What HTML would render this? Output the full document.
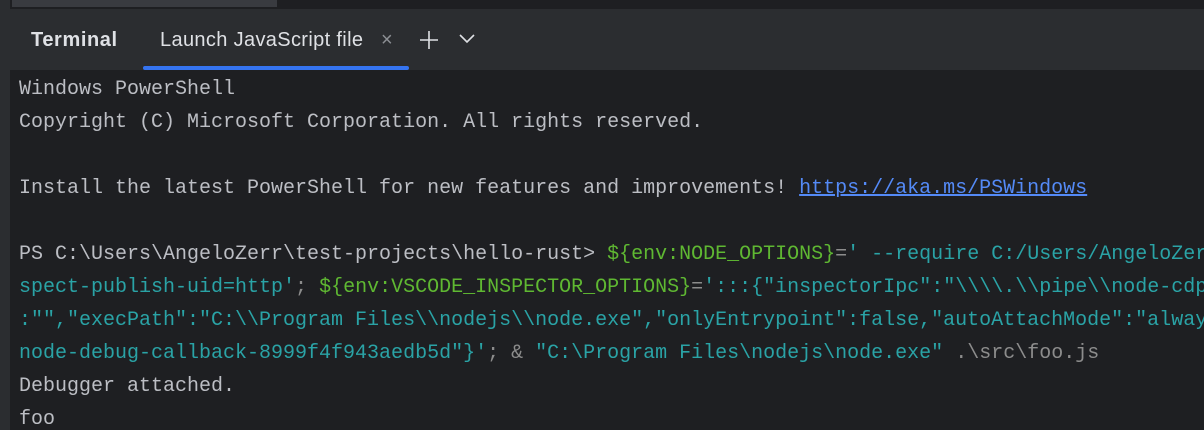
<!DOCTYPE html>
<html><head><style>
html,body{margin:0;padding:0;width:1204px;height:430px;overflow:hidden;background:#1e1f22;position:relative;font-family:"Liberation Sans",sans-serif}
.left{position:absolute;left:0;top:0;width:10px;height:430px;background:#2b2d30}
.top{position:absolute;left:10px;top:0;width:1194px;height:9px;background:#1e1f22}
.proj{position:absolute;left:12px;top:0;width:265px;height:7px;background:#393b40;overflow:hidden}
.tabs{position:absolute;left:10px;top:9px;width:1194px;height:61px;background:#2b2d30}
.tab{position:absolute;top:20px;font-size:20px;color:#dfe1e5}
.ul{position:absolute;left:143px;top:66px;width:266px;height:4px;border-radius:2px;background:#3574f0}
.term{position:absolute;left:19px;top:73px;font-family:"Liberation Mono",monospace;font-size:20px;line-height:33px;white-space:pre;color:#bcbec4}
.g{color:#5fb832}.t{color:#2aa3a6}.d{color:#8c8c8c}.l{color:#548af7;text-decoration:underline}
</style></head><body>
<div class="left"></div><div class="top"></div><div class="proj"></div>
<div class="tabs">
<div class="tab" style="left:21px;font-weight:bold;letter-spacing:0.6px;">Terminal</div>
<div class="tab" style="left:150px;letter-spacing:0.35px;">Launch JavaScript file</div>
<div class="tab" style="left:371px;color:#8c8f94;">×</div>
<svg style="position:absolute;left:408px;top:20px" width="22" height="22"><path d="M11 2V20M2 11H20" stroke="#dfe1e5" stroke-width="1.6"/></svg>
<svg style="position:absolute;left:448px;top:22px" width="18" height="14"><path d="M2 4L9 11L16 4" stroke="#dfe1e5" stroke-width="1.6" fill="none"/></svg>
</div>
<div class="ul"></div>
<div class="term">Windows PowerShell
Copyright (C) Microsoft Corporation. All rights reserved.

Install the latest PowerShell for new features and improvements! <span class="l">https://aka.ms/PSWindows</span>

PS C:\Users\AngeloZerr\test-projects\hello-rust&gt; <span class="g">${env:NODE_OPTIONS}</span><span class="d">=</span><span class="t">' --require C:/Users/AngeloZerr/</span>
<span class="t">spect-publish-uid=http'</span><span class="d">;</span> <span class="g">${env:VSCODE_INSPECTOR_OPTIONS}</span><span class="d">=</span><span class="t">':::{"inspectorIpc":"\\\\.\\pipe\\node-cdp</span>
<span class="t">:"","execPath":"C:\\Program Files\\nodejs\\node.exe","onlyEntrypoint":false,"autoAttachMode":"always</span>
<span class="t">node-debug-callback-8999f4f943aedb5d"}'</span><span class="d">; &amp;</span> <span class="t">"C:\Program Files\nodejs\node.exe"</span> <span class="d">.\src\foo.js</span>
Debugger attached.
foo</div>
</body></html>
